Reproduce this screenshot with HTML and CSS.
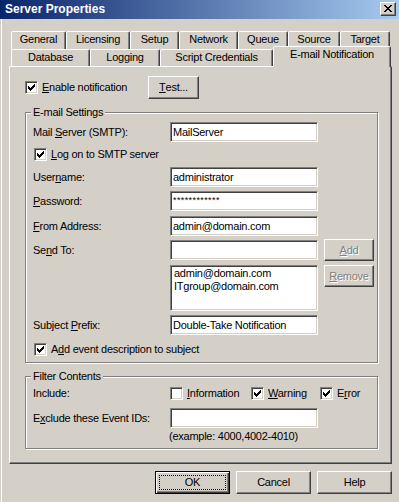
FILE: index.html
```html
<!DOCTYPE html>
<html>
<head>
<meta charset="utf-8">
<title>Server Properties</title>
<link rel="stylesheet" href="styles.css">
</head>
<body>
<div class="window">
  <div class="titlebar">
    <span class="title">Server Properties</span>
    <span class="close">
      <svg width="8" height="7" viewBox="0 0 8 7" shape-rendering="crispEdges"><path fill="#000" d="M0 0h2v1h-2zM6 0h2v1h-2zM1 1h2v1h-2zM5 1h2v1h-2zM2 2h4v1h-4zM3 3h2v1h-2zM2 4h4v1h-4zM1 5h2v1h-2zM5 5h2v1h-2zM0 6h2v1h-2zM6 6h2v1h-2z"/></svg>
    </span>
  </div>
  <div class="client">
    <div class="tabs">
      <div class="tabrow back">
        <div class="tab w-general">General</div>
        <div class="tab w-licensing">Licensing</div>
        <div class="tab w-setup">Setup</div>
        <div class="tab w-network">Network</div>
        <div class="tab w-queue">Queue</div>
        <div class="tab w-source">Source</div>
        <div class="tab w-target">Target</div>
      </div>
      <div class="tabrow front">
        <div class="tab w-database">Database</div>
        <div class="tab w-logging">Logging</div>
        <div class="tab w-script">Script Credentials</div>
        <div class="tab sel w-email">E-mail Notification</div>
      </div>
    </div>
    <div class="panel">
      <div class="toprow">
        <label class="cb cb-enable">
          <span class="check"><svg width="7" height="7" viewBox="0 0 7 7" shape-rendering="crispEdges"><path fill="#000" d="M0 2h1v3h-1zM1 3h1v3h-1zM2 4h1v3h-1zM3 3h1v3h-1zM4 2h1v3h-1zM5 1h1v3h-1zM6 0h1v3h-1z"/></svg></span>
          <span><u>E</u>nable notification</span>
        </label>
        <span class="btn btn-test"><u>T</u>est...</span>
      </div>

      <div class="group g-email">
        <span class="group-title">E-mail Settings</span>
        <div class="row r-first">
          <span class="lbl">Mail <u>S</u>erver (SMTP):</span>
          <span class="edit">MailServer</span>
        </div>
        <label class="cb r-logon">
          <span class="check"><svg width="7" height="7" viewBox="0 0 7 7" shape-rendering="crispEdges"><path fill="#000" d="M0 2h1v3h-1zM1 3h1v3h-1zM2 4h1v3h-1zM3 3h1v3h-1zM4 2h1v3h-1zM5 1h1v3h-1zM6 0h1v3h-1z"/></svg></span>
          <span><u>L</u>og on to SMTP server</span>
        </label>
        <div class="row r-user">
          <span class="lbl">User<u>n</u>ame:</span>
          <span class="edit">administrator</span>
        </div>
        <div class="row r-g4">
          <span class="lbl"><u>P</u>assword:</span>
          <span class="edit pw">************</span>
        </div>
        <div class="row r-g5">
          <span class="lbl"><u>F</u>rom Address:</span>
          <span class="edit">admin@domain.com</span>
        </div>
        <div class="row r-g4">
          <span class="lbl">Se<u>n</u>d To:</span>
          <span class="edit"></span>
          <span class="btn btn-side disabled"><u>A</u>dd</span>
        </div>
        <div class="row r-g5 r-list">
          <span class="lbl"></span>
          <div class="list">
            <div>admin@domain.com</div>
            <div>ITgroup@domain.com</div>
          </div>
          <span class="btn btn-side disabled"><u>R</u>emove</span>
        </div>
        <div class="row r-g4">
          <span class="lbl">Subject <u>P</u>refix:</span>
          <span class="edit">Double-Take Notification</span>
        </div>
        <label class="cb r-event">
          <span class="check"><svg width="7" height="7" viewBox="0 0 7 7" shape-rendering="crispEdges"><path fill="#000" d="M0 2h1v3h-1zM1 3h1v3h-1zM2 4h1v3h-1zM3 3h1v3h-1zM4 2h1v3h-1zM5 1h1v3h-1zM6 0h1v3h-1z"/></svg></span>
          <span>A<u>d</u>d event description to subject</span>
        </label>
      </div>

      <div class="group g-filter">
        <span class="group-title">Filter Contents</span>
        <div class="row r-include">
          <span class="lbl">Include:</span>
          <label class="cb cb-info">
            <span class="check"></span>
            <span><u>I</u>nformation</span>
          </label>
          <label class="cb cb-warn">
            <span class="check"><svg width="7" height="7" viewBox="0 0 7 7" shape-rendering="crispEdges"><path fill="#000" d="M0 2h1v3h-1zM1 3h1v3h-1zM2 4h1v3h-1zM3 3h1v3h-1zM4 2h1v3h-1zM5 1h1v3h-1zM6 0h1v3h-1z"/></svg></span>
            <span><u>W</u>arning</span>
          </label>
          <label class="cb">
            <span class="check"><svg width="7" height="7" viewBox="0 0 7 7" shape-rendering="crispEdges"><path fill="#000" d="M0 2h1v3h-1zM1 3h1v3h-1zM2 4h1v3h-1zM3 3h1v3h-1zM4 2h1v3h-1zM5 1h1v3h-1zM6 0h1v3h-1z"/></svg></span>
            <span>E<u>r</u>ror</span>
          </label>
        </div>
        <div class="row r-exclude">
          <span class="lbl">E<u>x</u>clude these Event IDs:</span>
          <span class="edit"></span>
        </div>
        <div class="example">(example: 4000,4002-4010)</div>
      </div>
    </div>
    <div class="buttons">
      <span class="btn btn-dlg default"><span class="focus">OK</span></span>
      <span class="btn btn-dlg">Cancel</span>
      <span class="btn btn-dlg">Help</span>
    </div>
  </div>
</div>
</body>
</html>
```

FILE: styles.css
```css
* { box-sizing: border-box; }
html, body { margin: 0; padding: 0; }
body {
  width: 399px;
  height: 502px;
  overflow: hidden;
  background: #D4D0C8;
  font-family: "Liberation Sans", Arial, sans-serif;
  font-size: 11px;
  letter-spacing: -0.25px;
  line-height: 13px;
  color: #000;
}
u { text-decoration: underline; text-underline-offset: 1px; }

.window {
  width: 399px;
  height: 502px;
  background: #D4D0C8;
  box-shadow: inset 1px 0 #D4D0C8, inset 2px 0 #fff;
}

.titlebar {
  height: 19px;
  display: flex;
  justify-content: space-between;
  padding: 0 3px 0 5px;
  background: linear-gradient(to right, #0A246A, #A6CAF0);
}
.title {
  color: #fff;
  font-weight: bold;
  font-size: 12px;
  letter-spacing: 0;
  line-height: 19px;
}
.close {
  width: 16px;
  height: 14px;
  margin-top: 2px;
  display: flex;
  align-items: center;
  justify-content: center;
  padding-bottom: 1px;
  background: #D4D0C8;
  border: 1px solid;
  border-color: #fff #404040 #404040 #fff;
  box-shadow: inset -1px -1px #808080;
}

.client { padding: 12px 7px 0 9px; }

.tabs { padding-left: 2px; }
.tabrow { display: flex; }
.tabrow.back { height: 18px; }
.tabrow.front { height: 17px; }
.tab {
  flex: none;
  height: 100%;
  border: 1px solid;
  border-bottom: 0;
  border-color: #fff #404040 transparent #fff;
  border-radius: 2px 2px 0 0;
  box-shadow: inset -1px 0 #808080;
  background: #D4D0C8;
  text-align: center;
  padding-top: 1px;
  white-space: nowrap;
}
.tab.sel {
  height: 21px;
  margin-top: -3px;
  position: relative;
  z-index: 1;
  padding-top: 1px;
}
.w-general { width: 55px; }
.w-licensing { width: 64px; }
.w-setup { width: 49px; }
.w-network { width: 59px; }
.w-queue { width: 50px; }
.w-source { width: 52px; }
.w-target { width: 50px; }
.w-database { width: 79px; }
.w-logging { width: 70px; }
.w-script { width: 113px; }
.w-email { width: 118px; }

.panel {
  height: 398px;
  border: 1px solid;
  border-color: #fff #404040 #404040 #fff;
  box-shadow: inset -1px -1px #808080;
  padding: 9px 13px 0 15px;
}

.toprow { display: flex; align-items: center; height: 23px; }
.cb { display: flex; align-items: center; gap: 4px; white-space: nowrap; }
.cb-enable { width: 123px; }

.check {
  flex: none;
  width: 13px;
  height: 13px;
  background: #fff;
  border: 1px solid;
  border-color: #808080 #fff #fff #808080;
  box-shadow: inset 1px 1px #404040, inset -1px -1px #D4D0C8;
  display: flex;
  align-items: center;
  justify-content: center;
}
.check svg { display: block; }

.btn {
  display: flex;
  align-items: center;
  justify-content: center;
  background: #D4D0C8;
  border: 1px solid;
  border-color: #fff #404040 #404040 #fff;
  box-shadow: inset -1px -1px #808080;
  white-space: nowrap;
}
.btn-test { width: 51px; height: 23px; }
.btn-side { width: 50px; height: 22px; margin-left: 6px; flex: none; }
.btn.disabled { color: #808080; text-shadow: 1px 1px #fff; }

.group {
  position: relative;
  border: 1px solid #808080;
  box-shadow: inset 1px 1px #fff, 1px 1px #fff;
  padding: 9px 0 6px 7px;
}
.group-title {
  position: absolute;
  top: -7px;
  left: 5px;
  padding: 0 2px;
  background: #D4D0C8;
  line-height: 13px;
}
.g-email { margin-top: 13px; }
.g-filter { margin-top: 13px; padding-top: 10px; padding-bottom: 5px; }

.row { display: flex; align-items: center; height: 20px; }
.lbl { width: 137px; flex: none; white-space: nowrap; }
.edit {
  flex: none;
  width: 148px;
  height: 20px;
  background: #fff;
  border: 1px solid;
  border-color: #808080 #fff #fff #808080;
  box-shadow: inset 1px 1px #404040, inset -1px -1px #D4D0C8;
  padding: 2px 0 0 2px;
  line-height: 14px;
  white-space: nowrap;
  overflow: hidden;
}
.edit.pw { font-size: 9px; letter-spacing: 0.4px; padding-top: 1px; }

.r-logon { margin-top: 6px; margin-left: 1px; height: 13px; }
.r-user { margin-top: 6px; }
.r-g4 { margin-top: 4px; }
.r-g5 { margin-top: 5px; }
.r-list { height: 46px; align-items: flex-start; }
.list {
  flex: none;
  width: 148px;
  height: 46px;
  background: #fff;
  border: 1px solid;
  border-color: #808080 #fff #fff #808080;
  box-shadow: inset 1px 1px #404040, inset -1px -1px #D4D0C8;
  padding: 1px 0 0 3px;
  line-height: 13px;
}
.r-list .btn-side { margin-top: 0; }
.r-event { margin-top: 8px; margin-left: 1px; height: 13px; }

.r-include { height: 13px; }
.cb-info { width: 81px; }
.cb-warn { width: 69px; }
.r-exclude { margin-top: 8px; }
.example { margin-top: 2px; padding-left: 136px; line-height: 13px; }

.buttons {
  display: flex;
  justify-content: flex-end;
  gap: 6px;
  margin-top: 7px;
}
.btn-dlg { width: 75px; height: 23px; }
.btn.default {
  border: 1px solid #000;
  box-shadow: inset 1px 1px #fff, inset -1px -1px #404040, inset -2px -2px #808080;
  padding: 3px;
}
.focus {
  width: 100%;
  height: 100%;
  border: 1px dotted #000;
  display: flex;
  align-items: center;
  justify-content: center;
}
```
